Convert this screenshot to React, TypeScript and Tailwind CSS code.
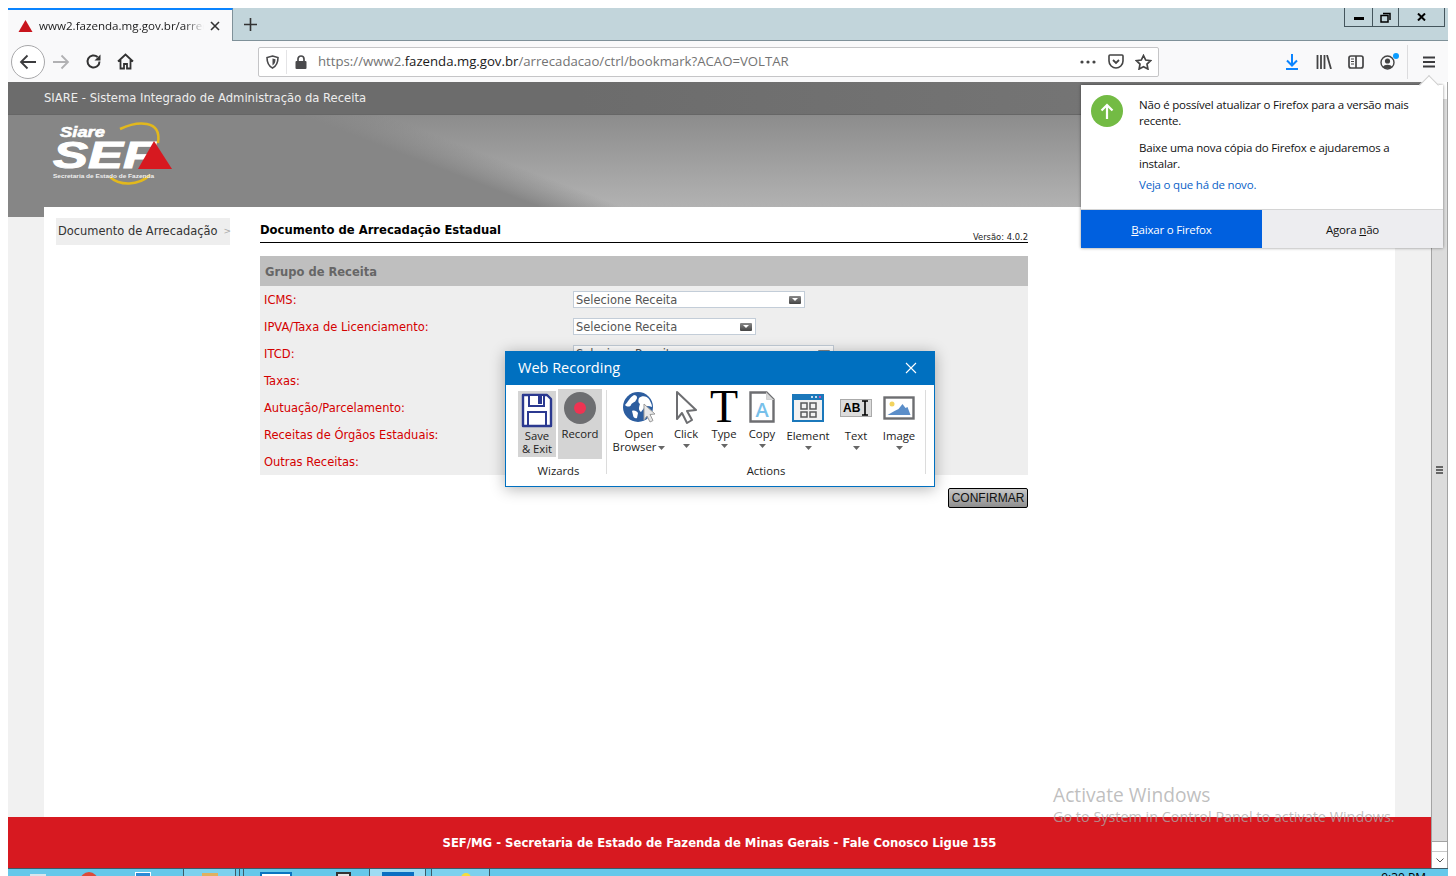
import React from "react";

const ui = "font-['Open_Sans','Noto_Sans',sans-serif]";
const verdana = "font-['DejaVu_Sans',sans-serif]";

function Caret({ className = "" }: { className?: string }) {
  return <svg width="7" height="4" viewBox="0 0 7 4" className={className}><path d="M0 0h7L3.5 4z" fill="#666" /></svg>;
}

function SelectBox({ w, label = "Selecione Receita" }: { w: string; label?: string }) {
  return (
    <div className={`${w} h-[17px] border border-[#c3cdd8] bg-white flex items-center justify-between pl-[2px] pr-[3px] text-[11.450px] text-[#555] leading-none`}>
      <span className="pt-[3px]">{label}</span>
      <span className="w-[12px] h-[8px] rounded-[1px] bg-gradient-to-b from-[#8a8a8a] to-[#444] flex items-center justify-center">
        <svg width="6" height="3" viewBox="0 0 6 3"><path d="M0 0h6L3 3z" fill="#fff" /></svg>
      </span>
    </div>
  );
}

const rows: [string, string][] = [
  ["ICMS:", "w-[232px]"],
  ["IPVA/Taxa de Licenciamento:", "w-[183px]"],
  ["ITCD:", "w-[261px]"],
  ["Taxas:", "w-[232px]"],
  ["Autuação/Parcelamento:", "w-[232px]"],
  ["Receitas de Órgãos Estaduais:", "w-[232px]"],
  ["Outras Receitas:", "w-[232px]"],
];

function TabStrip() {
  return (
    <div className="h-[33px] bg-[#c2d5db] border-b border-[#7f9199] flex relative">
      <div className="w-[225px] h-[33px] bg-[#f9f9fa] border-t-2 border-[#0a84ff] border-r border-r-[#7f9199] flex items-center pl-[10px]">
        <svg width="15" height="14" viewBox="0 0 15 14" className="shrink-0"><path d="M7.5 1L14.500 13H.5z" fill="#c8141c" /></svg>
        <span className={`${ui} ml-[6px] w-[165px] pt-[1px] overflow-hidden whitespace-nowrap text-[11.600px] text-[#222] [mask-image:linear-gradient(90deg,#000_88%,transparent)]`}>www2.fazenda.mg.gov.br/arrecadacao</span>
        <svg width="12" height="12" viewBox="0 0 12 12" className="ml-[5px] shrink-0"><path d="M2 2l8 8M10 2l-8 8" stroke="#333" strokeWidth="1.6" /></svg>
      </div>
      <div className="w-[34px] flex items-center justify-center">
        <svg width="15" height="15" viewBox="0 0 15 15"><path d="M7.500 1v13M1 7.500h13" stroke="#333" strokeWidth="1.6" /></svg>
      </div>
      <div className="flex-1" />
      <div className="mr-[3px] h-[19px] flex border border-t-0 border-[#44555c]">
        <div className="w-[28px] border-r border-[#44555c] flex items-center justify-center pt-[3px]"><div className="w-[10px] h-[3px] bg-black" /></div>
        <div className="w-[26px] border-r border-[#44555c] flex items-center justify-center">
          <svg width="11" height="11" viewBox="0 0 11 11"><path d="M3 1.500h7v6.500M1 3.500h7v6.500H1z" fill="none" stroke="#000" strokeWidth="1.5" /></svg>
        </div>
        <div className="w-[45px] flex items-center justify-center">
          <svg width="9" height="8" viewBox="0 0 9 8"><path d="M1 .5l7 7M8 .5l-7 7" stroke="#000" strokeWidth="2" /></svg>
        </div>
      </div>
    </div>
  );
}

function NavBar() {
  return (
    <div className="h-[41px] bg-[#f9f9fa] flex items-center relative">
      <div className="ml-[3px] w-[34px] h-[34px] rounded-full border border-[#a8a8aa] bg-white flex items-center justify-center">
        <svg width="18" height="16" viewBox="0 0 18 16"><path d="M17 8H2M8.500 1.500L2 8l6.500 6.500" fill="none" stroke="#3c3c3e" strokeWidth="1.8" /></svg>
      </div>
      <svg width="18" height="16" viewBox="0 0 18 16" className="ml-[7px]"><path d="M1 8h15M9.500 1.500L16 8l-6.500 6.500" fill="none" stroke="#b1b1b3" strokeWidth="1.8" /></svg>
      <svg width="17" height="17" viewBox="0 0 17 17" className="ml-[15px]"><path d="M14.500 8.500a6 6 0 1 1-1.900-4.400" fill="none" stroke="#333" strokeWidth="2" /><path d="M15.500 1.500v6h-6z" fill="#333" /></svg>
      <svg width="17" height="17" viewBox="0 0 17 17" className="ml-[15px]"><path d="M1 8.500L8.500 1.500 16 8.500M3.500 7v8.500h3.500v-4.500h3v4.500h3.500V7" fill="none" stroke="#333" strokeWidth="1.8" /></svg>
      <div className="ml-[124px] w-[901px] h-[30px] bg-white border border-[#c5c5c7] rounded-[2px] flex items-center">
        <svg width="13" height="14" viewBox="0 0 13 14" className="ml-[7px] shrink-0"><path d="M6.500 1L12 2.500c0 5-1.500 8.500-5.500 10.500C2.500 11 1 7.500 1 2.500z" fill="none" stroke="#4a4a4c" strokeWidth="1.6" /><path d="M6.500 3.500L9.500 4.300c0 3-.8 4.900-3 6.200z" fill="#4a4a4c" /></svg>
        <div className="ml-[7px] w-px h-[24px] bg-[#e4e4e6]" />
        <svg width="12" height="14" viewBox="0 0 12 14" className="ml-[8px] shrink-0"><path d="M3 6V4a3 3 0 0 1 6 0v2" fill="none" stroke="#4a4a4c" strokeWidth="1.7" /><rect x="0.500" y="6" width="11" height="8" rx="1" fill="#4a4a4c" /></svg>
        <div className={`${ui} ml-[11px] pt-[1px] text-[13.200px] text-[#737373] whitespace-nowrap`}>https://www2.<span className="text-[#1a1a1a]">fazenda.mg.gov.br</span>/arrecadacao/ctrl/bookmark?ACAO=VOLTAR</div>
        <div className="flex-1" />
        <svg width="16" height="4" viewBox="0 0 16 4" className="shrink-0"><circle cx="2" cy="2" r="1.600" fill="#444" /><circle cx="8" cy="2" r="1.600" fill="#444" /><circle cx="14" cy="2" r="1.600" fill="#444" /></svg>
        <svg width="16" height="15" viewBox="0 0 16 15" className="ml-[12px] shrink-0"><path d="M2 1h12a1 1 0 0 1 1 1v5c0 4-3.500 7-7 7s-7-3-7-7V2a1 1 0 0 1 1-1z" fill="none" stroke="#444" strokeWidth="1.600" /><path d="M5 6l3 3 3-3" fill="none" stroke="#444" strokeWidth="1.800" /></svg>
        <svg width="17" height="16" viewBox="0 0 17 16" className="ml-[11px] mr-[6px] shrink-0"><path d="M8.500 1.500l2.200 4.500 4.900.7-3.600 3.400.9 4.900-4.400-2.300-4.400 2.300.9-4.900L1.400 6.700l4.900-.7z" fill="none" stroke="#444" strokeWidth="1.700" /></svg>
      </div>
      <div className="flex-1" />
      <svg width="14" height="16" viewBox="0 0 14 16" className="mr-[17px]"><path d="M7 0v11M2 6.500L7 11.500 12 6.500M1 15h12" fill="none" stroke="#0a84ff" strokeWidth="2" /></svg>
      <svg width="16" height="14" viewBox="0 0 16 14" className="mr-[16px]"><path d="M1.500 0v14M5 0v14M8.500 0v14M11 0l4 14" fill="none" stroke="#444" strokeWidth="1.800" /></svg>
      <svg width="16" height="14" viewBox="0 0 16 14" className="mr-[16px]"><rect x="1" y="1" width="14" height="12" rx="2" fill="none" stroke="#444" strokeWidth="1.700" /><path d="M8 1v12" stroke="#444" strokeWidth="1.700" /><path d="M3 4h3M3 6.500h3M3 9h3" stroke="#444" /></svg>
      <div className="relative w-[16px] h-[16px] mr-[11px]">
        <svg width="15" height="15" viewBox="0 0 15 15" className="absolute left-0 top-[1px]"><circle cx="7.500" cy="7.500" r="6.500" fill="none" stroke="#444" strokeWidth="1.400" /><circle cx="7.500" cy="6" r="2.600" fill="#444" /><path d="M3 12c1-3 8-3 9 0-2 2-7 2-9 0z" fill="#444" /></svg>
        <span className="absolute -top-[1px] right-[-3px] w-[6px] h-[6px] rounded-full bg-[#0a9cff]" />
      </div>
      <div className="w-px h-[34px] bg-[#dcdcde] mr-[15px]" />
      <svg width="12" height="12" viewBox="0 0 12 12" className="mr-[13px]"><path d="M0 1.500h12M0 6h12M0 10.500h12" stroke="#3c3c3e" strokeWidth="1.800" /></svg>
    </div>
  );
}

function Doorhanger() {
  return (
    <div className={`${ui} absolute left-[1073px] top-[77px] w-[362px] h-[163px] bg-white shadow-[0_0_3px_rgba(0,0,0,0.45)] flex flex-col text-[11.500px] leading-[16px] tracking-[-0.2px] text-[#111]`}>
      <div className="absolute -top-[7px] left-[341px] w-[14px] h-[14px] rotate-45 bg-white border-l border-t border-[#cfcfcf]" />
      <div className="relative flex-1 flex pl-[10px] pt-[10px]">
        <div className="w-[32px] h-[32px] rounded-full bg-[#73bb44] flex items-center justify-center shrink-0">
          <svg width="14" height="16" viewBox="0 0 14 16"><path d="M7 16V2M1.500 7.500L7 2l5.500 5.500" fill="none" stroke="#fff" strokeWidth="2.200" /></svg>
        </div>
        <div className="ml-[16px] w-[282px] pt-[2px]">
          <p>Não é possível atualizar o Firefox para a versão mais recente.</p>
          <p className="mt-[11px]">Baixe uma nova cópia do Firefox e ajudaremos a instalar.</p>
          <p className="mt-[5px] text-[#0a5fc8]">Veja o que há de novo.</p>
        </div>
      </div>
      <div className="relative h-[39px] flex border-t border-[#d4d4d4]">
        <div className="w-[181px] pt-[1px] bg-[#0060df] text-white flex items-center justify-center"><span><u>B</u>aixar o Firefox</span></div>
        <div className="flex-1 pt-[1px] bg-[#ededf0] flex items-center justify-center"><span>Agora <u>n</u>ão</span></div>
      </div>
    </div>
  );
}

function Tool({ w, label, icon, caret = false, top = 2, inlineCaret = false }: { w: string; label: React.ReactNode; icon: React.ReactNode; caret?: boolean; top?: number; inlineCaret?: boolean }) {
  return (
    <div className={`${w} flex flex-col items-center`}>
      <div className="h-[36px] flex items-center justify-center">{icon}</div>
      <div className={`text-center leading-[13px] whitespace-nowrap ${top === 2 ? "mt-[2px]" : "mt-[4px]"}`}>
        {label}{inlineCaret && <Caret className="inline-block ml-[2px] align-middle" />}
      </div>
      {caret && <Caret className="mt-[4px]" />}
    </div>
  );
}

function WebRecording() {
  return (
    <div className={`${ui} absolute left-[497px] top-[343px] w-[430px] h-[136px] bg-white border border-[#0070c0] shadow-[0_2px_14px_rgba(0,0,0,0.3)] flex flex-col text-[11.300px] text-[#222]`}>
      <div className="h-[33px] bg-[#0070c0] flex items-center justify-between pl-[12px] pr-[17px] pb-[2px] text-white text-[14.500px]">
        <span>Web Recording</span>
        <svg width="12" height="12" viewBox="0 0 12 12"><path d="M1 1l10 10M11 1L1 11" stroke="#fff" strokeWidth="1.100" /></svg>
      </div>
      <div className="flex-1 flex pl-[12px]">
        <div className="w-[84px] flex flex-col items-stretch">
          <div className="flex h-[75px] pt-[4px] gap-[2px]">
            <div className="w-[38px] h-[66px] mt-[2px] bg-[#d4d4d4] flex flex-col items-center">
              <svg width="32" height="35" viewBox="0 0 32 35" className="mt-[2px]"><path d="M2 2h24l4 4v27H2z" fill="#fff" stroke="#2b3990" strokeWidth="2.400" strokeLinejoin="round" /><path d="M8 2h15v11H8z" fill="#fff" stroke="#2b3990" strokeWidth="2" /><rect x="17" y="3" width="4" height="8" fill="#2b3990" /><path d="M7 33V19h18v14" fill="none" stroke="#2b3990" strokeWidth="2" /></svg>
              <div className="text-center leading-[13px] mt-[1px]">Save<br />&amp; Exit</div>
            </div>
            <div className="w-[44px] h-[70px] bg-[#d4d4d4] flex flex-col items-center">
              <svg width="32" height="32" viewBox="0 0 32 32" className="mt-[3px]"><circle cx="16" cy="16" r="16" fill="#6d6e71" /><circle cx="16" cy="16" r="6" fill="#ef3352" /></svg>
              <div className="leading-[13px] mt-[3px]">Record</div>
            </div>
          </div>
          <div className="text-center leading-[13px] mt-[4px] pr-[3px]">Wizards</div>
        </div>
        <div className="w-px h-[84px] bg-[#dcdcdc] mt-[5px] ml-[4px] mr-[5px]" />
        <div className="w-[308px] flex flex-col">
          <div className="flex h-[75px] pt-[4px]">
            <Tool w="w-[54px]" inlineCaret label={<>Open<br />Browser</>} icon={
              <svg width="36" height="34" viewBox="0 0 36 34" className="ml-[2px]"><circle cx="16" cy="17" r="15" fill="#2c5d9f" /><path d="M3 15c3-3 5-8 9-10 3 0 4 3 2 5-1 3-4 2-5 5-1 2-4 2-6 0zM17 8c3-3 8-2 10 1 1 2 3 5 3 8-3-1-7-2-8 1l-3 4c-3-2-2-5-1-8-2-1-2-4-1-6zM10 21c2-1 5 0 6 2l-1 5c-2 1-4-1-4-3z" fill="#fff" /><path d="M22 14l11 10-5 .5 3 6-3 1.500-3-6-3 4z" fill="#e8e8e8" stroke="#9a9a9a" /></svg>
            } />
            <Tool w="w-[40px]" caret label="Click" icon={
              <svg width="24" height="34" viewBox="0 0 24 34"><path d="M3 2l19 18-9 1 5 9-5 3-5-10-5 6z" fill="#fff" stroke="#6d6e71" strokeWidth="2" strokeLinejoin="round" /></svg>
            } />
            <Tool w="w-[36px]" caret label="Type" icon={
              <span className="font-['Liberation_Serif',serif] text-[46px] leading-[36px] text-black">T</span>
            } />
            <Tool w="w-[40px]" caret label="Copy" icon={
              <svg width="26" height="32" viewBox="0 0 26 32"><path d="M1.500 1.500h16l7 7v22h-23z" fill="#fff" stroke="#6d6e71" strokeWidth="2.400" /><path d="M17.500 1.500v7h7" fill="#d8d8d8" stroke="#d0d0d0" /><text x="13" y="26" textAnchor="middle" fontFamily="Open Sans" fontSize="20" fontWeight="600" fill="#77c0ea">A</text></svg>
            } />
            <Tool w="w-[52px]" top={4} caret label="Element" icon={
              <svg width="32" height="28" viewBox="0 0 32 28" className="mt-[2px]"><rect width="32" height="28" fill="#1b78bb" /><rect x="2" y="6" width="28" height="20" fill="#f1f1f1" /><circle cx="20" cy="3" r="1" fill="#fff" /><circle cx="24" cy="3" r="1" fill="#fff" /><circle cx="28" cy="3" r="1" fill="#f4a" /><path d="M9 9h6v6H9zM18 9h6v6h-6zM9 18h6v5H9zM18 18h6v5h-6z" fill="none" stroke="#58595b" strokeWidth="1.500" /></svg>
            } />
            <Tool w="w-[44px]" top={4} caret label="Text" icon={
              <div className="w-[32px] h-[18px] bg-[#dcdcdc] border border-[#aaa] flex items-center pl-[2px] mt-[2px]">
                <span className="font-['Liberation_Sans',sans-serif] font-bold text-[12px] leading-none text-black tracking-[0.2px]">AB</span>
                <svg width="8" height="16" viewBox="0 0 8 16"><path d="M1 1h6M1 15h6M4 1v14" stroke="#000" strokeWidth="1.600" /></svg>
              </div>
            } />
            <Tool w="w-[42px]" top={4} caret label="Image" icon={
              <svg width="32" height="24" viewBox="0 0 32 24" className="mt-[2px]"><rect x="1.500" y="1.500" width="29" height="21" fill="#fff" stroke="#6d6e71" strokeWidth="2.400" /><circle cx="9" cy="8" r="2.500" fill="#f2d35e" /><path d="M4.500 19l7-4 4-2 4-5 3 4 2-1 3 8z" fill="#5b8ec9" /></svg>
            } />
          </div>
          <div className="text-center leading-[13px] mt-[4px]">Actions</div>
        </div>
        <div className="w-px h-[84px] bg-[#dcdcdc] mt-[5px] ml-[5px]" />
      </div>
    </div>
  );
}

function Scrollbar() {
  return (
    <div className="w-[17px] border-l border-r border-[#a3a3a3] bg-[#dcdcdc] flex flex-col">
      <div className="h-[17px] bg-white" />
      <div className="flex-1 flex items-center justify-center">
        <div className="w-[7px] h-[8px] flex flex-col justify-between">
          <div className="h-[2px] bg-[#666]" /><div className="h-[2px] bg-[#666]" /><div className="h-[2px] bg-[#666]" />
        </div>
      </div>
      <div className="h-[10px] bg-white border-t border-[#a3a3a3]" />
      <div className="h-[17px] bg-white border-t border-[#c8c8c8] flex items-center justify-center">
        <svg width="8" height="5" viewBox="0 0 8 5"><path d="M.5.500L4 4 7.500.500" fill="none" stroke="#555" /></svg>
      </div>
    </div>
  );
}

function Logo() {
  return (
    <svg width="124" height="66" viewBox="0 0 124 66" className="ml-[44px] mt-[7px] block overflow-visible">
      <path d="M68 7C85 -1 110 -3 106 21" fill="none" stroke="#e2b81d" strokeWidth="2.500" />
      <path d="M58 55c10 9 28 9 40 -2" fill="none" stroke="#e2b81d" strokeWidth="2.500" />
      <text x="8" y="15" textLength="45" lengthAdjust="spacingAndGlyphs" fontFamily="Liberation Sans" fontStyle="italic" fontWeight="700" fontSize="15" fill="#fff" stroke="#fff" strokeWidth=".6">Siare</text>
      <text x="1" y="46" textLength="102" lengthAdjust="spacingAndGlyphs" fontFamily="Liberation Sans" fontStyle="italic" fontWeight="700" fontSize="36" fill="#fff" stroke="#fff" strokeWidth="1">SEF</text>
      <path d="M102 19L120 47H86z" fill="#d71920" />
      <text x="1" y="56" textLength="101" lengthAdjust="spacingAndGlyphs" fontFamily="Liberation Sans" fontWeight="700" fontSize="6" fill="#eee">Secretaria de Estado de Fazenda</text>
    </svg>
  );
}

function PageBody() {
  return (
    <div className={`${verdana} h-[786px] flex flex-col`}>
      <div className="h-[33px] bg-[linear-gradient(90deg,#6c6c6c_0%,#6c6c6c_40%,#7a7a7a_100%)] border-b border-[#666] flex items-center pl-[36px] pt-[1px] text-[11.600px] text-[#eee]">SIARE - Sistema Integrado de Administração da Receita</div>
      <div className="h-[92px] bg-[linear-gradient(21deg,#868686_32%,transparent_37%),linear-gradient(180deg,#8c8c8c,#b2b2b2)] shrink-0">
        <Logo />
      </div>
      <div className="flex-1 flex min-h-0">
        <div className="w-[36px] bg-[#f1f1f1] flex flex-col"><div className="h-[10px] bg-[#868686]" /></div>
        <div className="w-[1351px] bg-white flex pl-[12px] pt-[11px]">
          <div className="w-[174px] h-[27px] bg-[#eeeeee] flex items-center pl-[2px] pt-[1px] text-[11.450px] text-[#333] whitespace-nowrap">
            Documento de Arrecadação<span className="ml-[6px] text-[#aaa] text-[9px]">&gt;</span>
          </div>
          <div className="ml-[30px] w-[768px] flex flex-col">
            <div className="h-[25px] border-b border-black flex items-center justify-between">
              <span className="text-[11.600px] font-bold text-black leading-none pt-[1px]">Documento de Arrecadação Estadual</span>
              <span className="text-[8.400px] text-[#222] leading-none self-end pb-[1px]">Versão: 4.0.2</span>
            </div>
            <div className="mt-[13px] h-[30px] bg-[#bfbfbf] flex items-center pl-[5px] pt-[3px] text-[11.500px] font-bold text-[#666]">Grupo de Receita</div>
            <div className="bg-[#eeeeee]">
              {rows.map(([label, w]) => (
                <div key={label} className="h-[27px] flex items-center pl-[4px] text-[11.500px] text-[#d40000]">
                  <span className="w-[309px] pt-[3px]">{label}</span>
                  <SelectBox w={w} />
                </div>
              ))}
            </div>
            <div className="mt-[13px] flex justify-end">
              <button className="w-[80px] h-[20px] border border-black rounded-[2px] bg-gradient-to-b from-[#c8c8c8] to-[#8e8e8e] font-['Liberation_Sans',sans-serif] text-[12px] text-[#111] leading-none">CONFIRMAR</button>
            </div>
          </div>
        </div>
        <div className="w-[36px] bg-[#f1f1f1]" />
      </div>
      <div className="h-[51px] bg-[#d71920] flex items-center justify-center pt-[2px] text-[11.650px] font-bold text-white">SEF/MG - Secretaria de Estado de Fazenda de Minas Gerais - Fale Conosco Ligue 155</div>
    </div>
  );
}

function Taskbar() {
  return (
    <div className="h-[8px] bg-[#66c8ea] border-t border-[#3d5a66] flex overflow-hidden relative">
      <div className="w-[175px] relative">
        <div className="absolute left-[22px] top-[5px] w-[16px] h-[6px] bg-[#d8e6ec]" />
        <div className="absolute left-[72px] top-[3px] w-[18px] h-[18px] rounded-full bg-[#dd4b39]" />
        <div className="absolute left-[127px] top-[3px] w-[16px] h-[8px] bg-[#2b8ad6] border border-white" />
      </div>
      <div className="w-[52px] border-l border-[#3d5a66] bg-[#7dd1ee] flex justify-center"><div className="w-[16px] h-[6px] mt-[4px] bg-[#e0b060]" /></div>
      <div className="w-[4px] border-l border-[#3d5a66]" />
      <div className="w-[4px] border-l border-[#3d5a66]" />
      <div className="w-[126px] border-l border-[#3d5a66] relative">
        <div className="absolute left-[16px] top-[3px] w-[32px] h-[8px] bg-white border-2 border-[#0a74c0]" />
        <div className="absolute left-[92px] top-[3px] w-[15px] h-[8px] bg-[#e5e5e5] border-2 border-[#333]" />
      </div>
      <div className="w-[56px] border-l border-[#3d5a66] bg-[#9fdcf3] flex justify-center"><div className="w-[32px] h-[6px] mt-[3px] bg-[#0a6fc2]" /></div>
      <div className="w-[6px] border-l border-[#3d5a66]" />
      <div className="w-[59px] border-l border-r border-[#3d5a66] bg-[#7dd1ee] flex justify-center"><div className="w-[10px] h-[6px] mt-[4px] ml-[10px] bg-[#f4dc3c] rounded-t-full" /></div>
      <div className="flex-1 flex justify-end pr-[22px]">
        <span className={`${ui} text-[12px] leading-[12px] pt-[3px] text-black whitespace-nowrap`}>9:30 PM</span>
      </div>
    </div>
  );
}

export default function App() {
  return (
    <div className="w-[1456px] h-[876px] overflow-hidden bg-white pl-[8px] pr-[8px] pt-[8px]">
      <div className="relative w-[1440px] h-[868px] flex flex-col">
        <TabStrip />
        <NavBar />
        <div className="flex h-[786px]">
          <div className="w-[1423px]"><PageBody /></div>
          <Scrollbar />
        </div>
        <Taskbar />
        <Doorhanger />
        <WebRecording />
        <div className={`${ui} absolute left-[1045px] top-[773px] pointer-events-none text-[rgba(170,170,170,0.75)] whitespace-nowrap`}>
          <div className="text-[19.200px] leading-[27px]">Activate Windows</div>
          <div className="text-[14.400px] leading-[19px] -mt-[1px]">Go to System in Control Panel to activate Windows.</div>
        </div>
      </div>
    </div>
  );
}
